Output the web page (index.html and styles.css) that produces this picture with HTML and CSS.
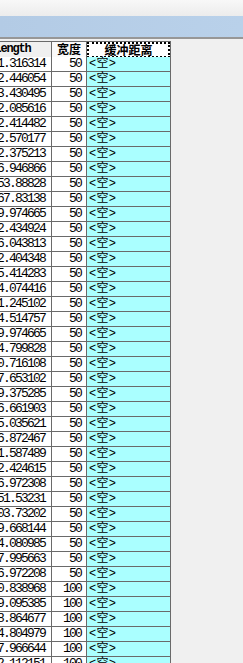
FILE: index.html
```html
<!DOCTYPE html>
<html>
<head>
<meta charset="utf-8">
<link rel="stylesheet" href="styles.css">
</head>
<body>
<div class="topbar"></div>
<div class="titlebar"></div>
<div class="grid">
  <div class="h c1">Length</div>
  <div class="h c2">宽度</div>
  <div class="h c3"><span class="focus">缓冲距离</span></div>

  <div class="c1">1.316314</div><div class="c2">50</div><div class="c3">&lt;空&gt;</div>
  <div class="c1">2.446054</div><div class="c2">50</div><div class="c3">&lt;空&gt;</div>
  <div class="c1">3.430495</div><div class="c2">50</div><div class="c3">&lt;空&gt;</div>
  <div class="c1">2.085616</div><div class="c2">50</div><div class="c3">&lt;空&gt;</div>
  <div class="c1">2.414482</div><div class="c2">50</div><div class="c3">&lt;空&gt;</div>
  <div class="c1">2.570177</div><div class="c2">50</div><div class="c3">&lt;空&gt;</div>
  <div class="c1">2.375213</div><div class="c2">50</div><div class="c3">&lt;空&gt;</div>
  <div class="c1">6.946866</div><div class="c2">50</div><div class="c3">&lt;空&gt;</div>
  <div class="c1">53.88828</div><div class="c2">50</div><div class="c3">&lt;空&gt;</div>
  <div class="c1">67.83138</div><div class="c2">50</div><div class="c3">&lt;空&gt;</div>
  <div class="c1">9.974665</div><div class="c2">50</div><div class="c3">&lt;空&gt;</div>
  <div class="c1">2.434924</div><div class="c2">50</div><div class="c3">&lt;空&gt;</div>
  <div class="c1">6.043813</div><div class="c2">50</div><div class="c3">&lt;空&gt;</div>
  <div class="c1">2.404348</div><div class="c2">50</div><div class="c3">&lt;空&gt;</div>
  <div class="c1">5.414283</div><div class="c2">50</div><div class="c3">&lt;空&gt;</div>
  <div class="c1">4.074416</div><div class="c2">50</div><div class="c3">&lt;空&gt;</div>
  <div class="c1">1.245102</div><div class="c2">50</div><div class="c3">&lt;空&gt;</div>
  <div class="c1">4.514757</div><div class="c2">50</div><div class="c3">&lt;空&gt;</div>
  <div class="c1">9.974665</div><div class="c2">50</div><div class="c3">&lt;空&gt;</div>
  <div class="c1">4.799828</div><div class="c2">50</div><div class="c3">&lt;空&gt;</div>
  <div class="c1">0.716108</div><div class="c2">50</div><div class="c3">&lt;空&gt;</div>
  <div class="c1">7.653102</div><div class="c2">50</div><div class="c3">&lt;空&gt;</div>
  <div class="c1">9.375285</div><div class="c2">50</div><div class="c3">&lt;空&gt;</div>
  <div class="c1">6.661903</div><div class="c2">50</div><div class="c3">&lt;空&gt;</div>
  <div class="c1">5.035621</div><div class="c2">50</div><div class="c3">&lt;空&gt;</div>
  <div class="c1">6.872467</div><div class="c2">50</div><div class="c3">&lt;空&gt;</div>
  <div class="c1">1.587489</div><div class="c2">50</div><div class="c3">&lt;空&gt;</div>
  <div class="c1">2.424615</div><div class="c2">50</div><div class="c3">&lt;空&gt;</div>
  <div class="c1">6.972308</div><div class="c2">50</div><div class="c3">&lt;空&gt;</div>
  <div class="c1">51.53231</div><div class="c2">50</div><div class="c3">&lt;空&gt;</div>
  <div class="c1">03.73202</div><div class="c2">50</div><div class="c3">&lt;空&gt;</div>
  <div class="c1">9.668144</div><div class="c2">50</div><div class="c3">&lt;空&gt;</div>
  <div class="c1">4.080985</div><div class="c2">50</div><div class="c3">&lt;空&gt;</div>
  <div class="c1">7.995663</div><div class="c2">50</div><div class="c3">&lt;空&gt;</div>
  <div class="c1">6.972208</div><div class="c2">50</div><div class="c3">&lt;空&gt;</div>
  <div class="c1">0.838968</div><div class="c2">100</div><div class="c3">&lt;空&gt;</div>
  <div class="c1">9.095385</div><div class="c2">100</div><div class="c3">&lt;空&gt;</div>
  <div class="c1">8.864677</div><div class="c2">100</div><div class="c3">&lt;空&gt;</div>
  <div class="c1">4.804979</div><div class="c2">100</div><div class="c3">&lt;空&gt;</div>
  <div class="c1">7.966644</div><div class="c2">100</div><div class="c3">&lt;空&gt;</div>
  <div class="c1">2.112151</div><div class="c2">100</div><div class="c3">&lt;空&gt;</div>
</div>
</body>
</html>
```
FILE: styles.css
```css
html, body {
  margin: 0;
  padding: 0;
  background: #f0f0f0;
  height: 663px;
  overflow: hidden;
}
.topbar {
  height: 16px;
  background: linear-gradient(#f8f8f8, #ececec);
}
.titlebar {
  height: 21px;
  background: linear-gradient(90deg, #b3cbe5, #b9d1ea);
  border-bottom: 2px solid #979797;
}
.grid {
  display: grid;
  grid-template-columns: 78px 35px 84px;
  grid-auto-rows: 15px;
  width: 197px;
  margin-top: 2px;
  margin-left: -26px;
  border-top: 1px solid #6a6a6a;
  font-family: "Liberation Mono", "Noto Sans CJK SC", monospace;
  font-size: 13px;
  line-height: 14px;
  color: #000;
}
.grid > div {
  box-sizing: border-box;
  border-right: 1px solid #6a6a6a;
  border-bottom: 1px solid #6a6a6a;
  white-space: nowrap;
}
.c1 {
  background: #fff;
  text-align: right;
  padding-right: 6px;
  letter-spacing: -1.8px;
}
.c2 {
  background: #fff;
  text-align: right;
  padding-right: 5px;
  letter-spacing: -1.8px;
}
.c3 {
  background: #aaffff;
  padding-left: 2px;
  font-size: 12px;
  letter-spacing: 0.3px;
}
.grid > .h {
  height: 17px;
  line-height: 15px;
  font-weight: bold;
  text-align: center;
  padding: 0;
  background: #f0f0f0;
  overflow: hidden;
}
.grid > .h.c1 {
  font-size: 12px;
  letter-spacing: -1.2px;
}
.grid > .h.c2 {
  background: #fafafa;
  font-family: "Noto Sans CJK SC", sans-serif;
  font-size: 12px;
  line-height: 13px;
  letter-spacing: 0;
  overflow: visible;
}
.grid > .h.c3 {
  background: #fff;
  display: flex;
  font-family: "Noto Sans CJK SC", sans-serif;
  letter-spacing: 0;
}
.focus {
  flex: 1;
  border: 2px dotted #000;
  line-height: 12px;
  text-align: center;
  overflow: hidden;
}
```
